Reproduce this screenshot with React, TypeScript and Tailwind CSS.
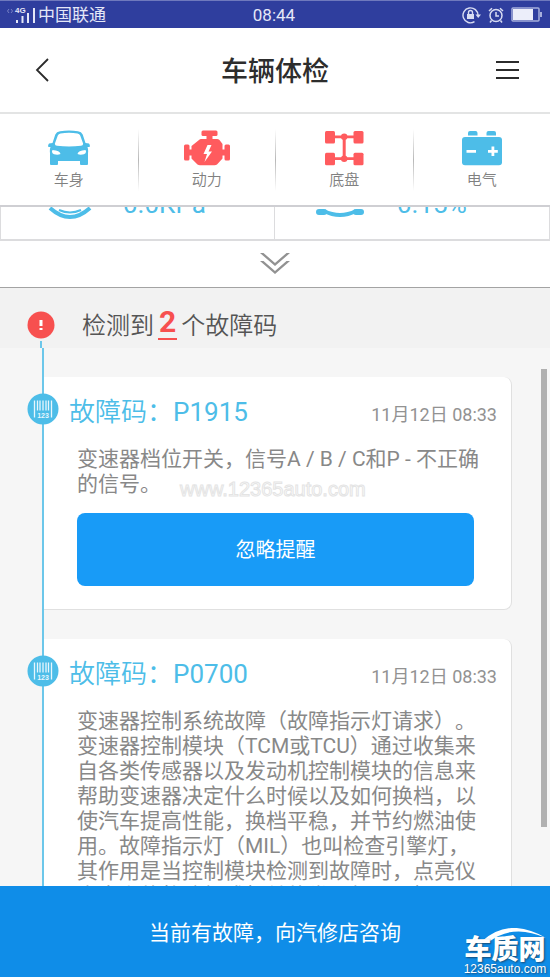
import type { ReactNode } from "react";

const sans = "font-['Roboto','Noto_Sans_CJK_SC',sans-serif]";

function CarIcon() {
  return (
    <svg viewBox="0 0 42 36" className="h-9 w-[42px]" fill="#4dbde8" aria-hidden="true">
      <path
        fillRule="evenodd"
        d="M12 1.200Q21 -.2 30 1.200Q33.500 1.700 34.700 4.500L37.500 13L41 13.500Q42.500 15.500 41.500 17H39.500Q40.500 20 40 23V34Q40 35 39 35H33Q32 35 32 34V31H10V34Q10 35 9 35H3Q2 35 2 34V23Q1.500 20 2.500 17H.5Q-.5 15.500 1 13.500L4.500 13L7.300 4.500Q8.500 1.700 12 1.200ZM12.500 3.500Q10.500 3.800 9.800 5.500L7 13.200Q6.500 15.500 9 15.800Q21 17 33 15.800Q35.500 15.500 35 13.200L32.200 5.500Q31.500 3.800 29.500 3.500Q21 2.200 12.500 3.500ZM4.500 20Q3 23 6 24.300Q10 25.300 12.500 24Q12 20.500 4.500 20ZM37.500 20Q30 20.500 29.500 24Q32 25.300 36 24.300Q39 23 37.500 20Z"
      />
    </svg>
  );
}

function EngineIcon() {
  return (
    <svg viewBox="0 0 46 36" className="h-9 w-[46px]" fill="#ff5b5e" aria-hidden="true">
      <rect x="17.500" y=".5" width="16" height="5.500" rx="1.500" />
      <rect x="22.500" y="5" width="6" height="5" />
      <rect y="14.500" width="5.500" height="16" rx="1.500" />
      <rect x="40.500" y="14.500" width="5.500" height="16" rx="1.500" />
      <rect x="4" y="19.500" width="6" height="6" />
      <rect x="37" y="19.500" width="5" height="6" />
      <path
        fillRule="evenodd"
        d="M17 9H33Q34.500 9 35.500 10L38.500 14V28.500L33 34.500Q32 35.200 30.500 35.200H16Q14.500 35.200 13.500 34.500L7.500 28.500V16L15 10Q16 9 17 9ZM23.500 15L19.500 24H23L20.500 32L28 21.500H24.500L27.500 15Z"
      />
    </svg>
  );
}

function ChassisIcon() {
  return (
    <svg viewBox="0 0 40 36" className="h-9 w-10" fill="#ff5b5e" aria-hidden="true">
      <rect x="1" y="1" width="10" height="12.500" rx="1.500" />
      <rect x="29.500" y="1" width="10" height="12.500" rx="1.500" />
      <rect x="1" y="22.700" width="10" height="12.500" rx="1.500" />
      <rect x="29.500" y="22.700" width="10" height="12.500" rx="1.500" />
      <path d="M10 5.500H30V8.200H10ZM10 27.200H30V30H10ZM18.700 7H21.700V29H18.700Z" />
      <circle cx="20.200" cy="6.800" r="3.200" />
      <circle cx="20.200" cy="28.800" r="3.200" />
    </svg>
  );
}

function BatteryIcon() {
  return (
    <svg viewBox="0 0 40 36" className="h-9 w-10" fill="#4dbde8" aria-hidden="true">
      <rect y="7" width="40" height="28.200" rx="3" />
      <path d="M6 5.500V3Q6 1 8 1H13.500Q15.500 1 15.500 3V5.500ZM24.500 5.500V3Q24.500 1 26.500 1H32Q34 1 34 3V5.500Z" />
      <path d="M4.500 20H14V22.800H4.500ZM26 20H29.500V16.500H32.300V20H35.800V22.800H32.300V26H29.500V22.800H26Z" fill="#fff" />
    </svg>
  );
}

function BarcodeBadge() {
  return (
    <svg viewBox="0 0 32 32" className="size-8" aria-hidden="true">
      <circle cx="16" cy="16" r="15.500" fill="#4dbde8" />
      <path
        d="M7.500 7.500V24.500M24.500 7.500V24.500M10.500 7.500V17.500M13 7.500V17.500M16 7.500V17.500M19 7.500V17.500M21.500 7.500V17.500"
        stroke="#e6f6fd"
        strokeWidth="1.300"
      />
      <text x="16" y="24.500" textAnchor="middle" fontSize="7" fontWeight="700" fill="#e6f6fd" fontFamily="Liberation Sans, sans-serif">
        123
      </text>
    </svg>
  );
}

const tabs: { label: string; icon: ReactNode }[] = [
  { label: "车身", icon: <CarIcon /> },
  { label: "动力", icon: <EngineIcon /> },
  { label: "底盘", icon: <ChassisIcon /> },
  { label: "电气", icon: <BatteryIcon /> },
];

function StatusBar() {
  return (
    <div className="grid h-7 shrink-0 grid-cols-3 items-center border-t border-[#6f79bd] bg-[#2f3e9e] pr-2 pl-[6px] text-[17px] leading-6 text-[#e4e7f7]">
      <div className="flex items-center">
        <svg viewBox="0 0 32 20" className="h-5 w-8" aria-hidden="true">
          <path d="M3 4L1.500 6L3 8M5 4L6.500 6L5 8" stroke="#7782c5" fill="none" />
          <text x="9" y="8" fontSize="8" fontWeight="700" fill="#e4e7f7" fontFamily="Liberation Sans, sans-serif">4G</text>
          <path d="M11 15V18M16.500 11V18M22 8V18M28 3V18" stroke="#e4e7f7" strokeWidth="2" />
        </svg>
        <span>中国联通</span>
      </div>
      <span className="text-center">08:44</span>
      <div className="flex items-center justify-end gap-[7px]">
        <svg viewBox="0 0 19 18" className="h-[18px] w-[19px]" fill="none" stroke="#d8dcf2" strokeWidth="1.400" aria-hidden="true">
          <path d="M12.500 15.700A7.500 7.500 0 1 1 16 9.500" />
          <path d="M13.500 8.500H19L16.200 12Z" fill="#d8dcf2" stroke="none" />
          <rect x="5" y="8" width="7" height="5" fill="#d8dcf2" stroke="none" />
          <path d="M6.500 8V6.500A2 2 0 0 1 10.500 6.500V8" />
        </svg>
        <svg viewBox="0 0 16 16" className="size-4" fill="none" stroke="#d8dcf2" strokeWidth="1.500" aria-hidden="true">
          <circle cx="8" cy="8.500" r="6" />
          <path d="M8 5V9H11M1 4L4 1.200M15 4L12 1.200M3.500 13.500L2 15.500M12.500 13.500L14 15.500" />
        </svg>
        <svg viewBox="0 0 31 15" className="h-[15px] w-[31px]" aria-hidden="true">
          <rect x="1" y="1" width="27" height="13" rx="1" fill="none" stroke="#a7afdc" strokeWidth="1.500" />
          <rect x="2" y="2" width="20" height="11" fill="#eceefa" />
          <rect x="29" y="5" width="2" height="5" fill="#a7afdc" />
        </svg>
      </div>
    </div>
  );
}

function FaultCard({ code, time, children }: { code: string; time: string; children: ReactNode }) {
  return (
    <article className="flex items-start">
      <div className="z-10 -mr-4 ml-[27px] mt-4 shrink-0">
        <BarcodeBadge />
      </div>
      <div className="mr-[38px] min-w-0 flex-1 rounded-r-lg border-r border-b border-[#e0e0e0] bg-white pb-[23px]">
        <header className="flex items-center justify-between pr-[14px] pl-[26px] pt-[15px]">
          <h2 className="text-[26px] leading-10 font-[350] text-[#4dbde8]">
            故障码：<span className="font-normal">{code}</span>
          </h2>
          <time className="pt-[6px] text-[18px] leading-8 text-[#929292]">{time}</time>
        </header>
        <div className="pr-[26px] pl-[34px] pt-[15px]">{children}</div>
      </div>
    </article>
  );
}

export default function App() {
  return (
    <div className={`flex h-screen flex-col overflow-hidden bg-white [text-spacing-trim:space-all] ${sans}`}>
      <StatusBar />
      <header className="flex h-[86px] shrink-0 items-center justify-between border-b-2 border-[#e3e4e4] px-[30px]">
        <button type="button" aria-label="返回" className="flex w-6 justify-center">
          <svg viewBox="0 0 14 24" className="h-6 w-[14px]" fill="none" stroke="#2b2b2b" strokeWidth="1.800" aria-hidden="true">
            <path d="M13 1L2 12L13 23" />
          </svg>
        </button>
        <h1 className="pt-1 text-[27px] leading-10 font-medium text-[#2d2d2d]">车辆体检</h1>
        <button type="button" aria-label="菜单">
          <svg viewBox="0 0 24 20" className="h-5 w-6" stroke="#2b2b2b" strokeWidth="2" aria-hidden="true">
            <path d="M0 2H23M0 10H23M0 18H23" />
          </svg>
        </button>
      </header>

      <nav className="flex h-[93px] shrink-0 items-center border-b-2 border-[#cfcfd3]">
        {tabs.map((tab, i) => (
          <div key={tab.label} className="flex flex-1 items-center">
            {i > 0 && <div className="h-[62px] w-px bg-linear-to-b from-white via-[#b8b8b8] to-white" />}
            <button type="button" className="flex flex-1 flex-col items-center gap-[2px] pt-[2px] text-[15px] leading-6 font-[350] text-[#808080]">
              {tab.icon}
              {tab.label}
            </button>
          </div>
        ))}
      </nav>

      <section className="grid h-[34px] shrink-0 grid-cols-2 overflow-hidden border-x border-b-2 border-[#dcdcde] text-[26px] leading-8 text-[#4dbde8]">
        <div className="flex h-8 items-end overflow-hidden border-r border-[#dcdcde] pb-[19px] pl-[46px]">
          <svg viewBox="0 0 46 40" className="h-10 w-[46px] shrink-0" fill="none" stroke="#4dbde8" aria-hidden="true">
            <path d="M3 28Q23 46 43 28" strokeWidth="4" />
            <path d="M12 30Q23 35 34 30" strokeWidth="2" />
          </svg>
          <span className="pl-[30px]">0.0KPa</span>
        </div>
        <div className="flex h-8 items-end overflow-hidden pb-[19px] pl-[41px]">
          <svg viewBox="0 0 48 40" className="h-10 w-12 shrink-0" fill="none" stroke="#4dbde8" aria-hidden="true">
            <path d="M3 32H8M40 32H45" strokeWidth="6" strokeLinecap="round" />
            <path d="M8 31Q24 39 40 31" strokeWidth="4" />
          </svg>
          <span className="pl-[33px]">0.15%</span>
        </div>
      </section>

      <button type="button" aria-label="展开" className="flex h-[47px] shrink-0 items-center justify-center border-b border-[#a3a3a3]">
        <svg viewBox="0 0 30 22" className="h-[22px] w-[30px]" fill="#929292" aria-hidden="true">
          <path d="M0 0H3.500L15 10L26.500 0H30L15 13ZM0 8H3.500L15 18L26.500 8H30L15 21Z" />
        </svg>
      </button>

      <div className="flex h-[60px] shrink-0 items-start bg-[#f2f2f2] pl-[27px]">
        <div className="flex flex-col items-center gap-[2px] pt-[23px]">
          <svg viewBox="0 0 28 28" className="size-7" aria-hidden="true">
            <circle cx="14" cy="14" r="13.500" fill="#f7504f" />
            <path d="M14 9V15M14 17V19" stroke="#fff" strokeWidth="3" />
          </svg>
          <div className="h-2 w-[2px] bg-[#6cc7ea]" />
        </div>
        <p className="flex items-start gap-1 pt-[18px] pl-[27px] text-[24px] leading-10 font-[350] text-[#555]">
          检测到
          <strong className="border-b-2 border-[#f7504f] px-[1px] text-[30px] leading-8 font-bold text-[#f7504f]">2</strong>
          个故障码
        </p>
      </div>

      <main className="relative min-h-0 flex-1 overflow-hidden bg-[#f6f6f6] pt-[29px]">
        <div className="absolute inset-y-0 left-[42px] z-10 w-[2px] bg-[#6cc7ea]" />
        <div className="absolute top-[21px] right-[3px] h-[458px] w-[6px] bg-[#b0b0b0]" />
        <div className="flex flex-col gap-[29px]">
          <FaultCard code="P1915" time="11月12日 08:33">
            <p className="text-[21px] leading-[25px] text-[#888]">
              变速器档位开关，信号A / B / C和P - 不正确的信号。
            </p>
            <button type="button" className="mt-4 block h-[73px] w-full max-w-[397px] rounded-lg bg-[#189bf7] pt-px text-[20px] text-white">
              忽略提醒
            </button>
          </FaultCard>
          <FaultCard code="P0700" time="11月12日 08:33">
            <p className="text-[21px] leading-[25px] text-[#888]">
              变速器控制系统故障（故障指示灯请求）。变速器控制模块（TCM或TCU）通过收集来自各类传感器以及发动机控制模块的信息来帮助变速器决定什么时候以及如何换档，以使汽车提高性能，换档平稳，并节约燃油使用。故障指示灯（MIL）也叫检查引擎灯，其作用是当控制模块检测到故障时，点亮仪表盘上的故障灯或相关的类似灯，以提醒
            </p>
          </FaultCard>
        </div>
        <div className="absolute top-[129px] left-[180px] font-['Liberation_Sans',sans-serif] text-[20px] leading-6 text-white [-webkit-text-stroke:1px_#e4e4e4]">
          www.12365auto.com
        </div>
      </main>

      <footer className="relative h-[91px] shrink-0">
        <button type="button" className="size-full bg-[#0f8de8] pt-1 text-[21px] text-white">
          当前有故障，向汽修店咨询
        </button>
        <div className="absolute right-[3px] bottom-[2px] flex flex-col items-center text-white [text-shadow:1px_1px_2px_#174a73]">
          <svg viewBox="0 0 84 14" className="h-[14px] w-[84px]" fill="#fff" aria-hidden="true">
            <path d="M18 14Q46 -12 83 10Q50 -5 26 14Z" />
          </svg>
          <span className="-mt-[5px] text-[27px] leading-[26px] font-black">车质网</span>
          <span className="font-['Liberation_Sans',sans-serif] text-[12px] leading-3">12365auto.com</span>
        </div>
      </footer>
    </div>
  );
}
